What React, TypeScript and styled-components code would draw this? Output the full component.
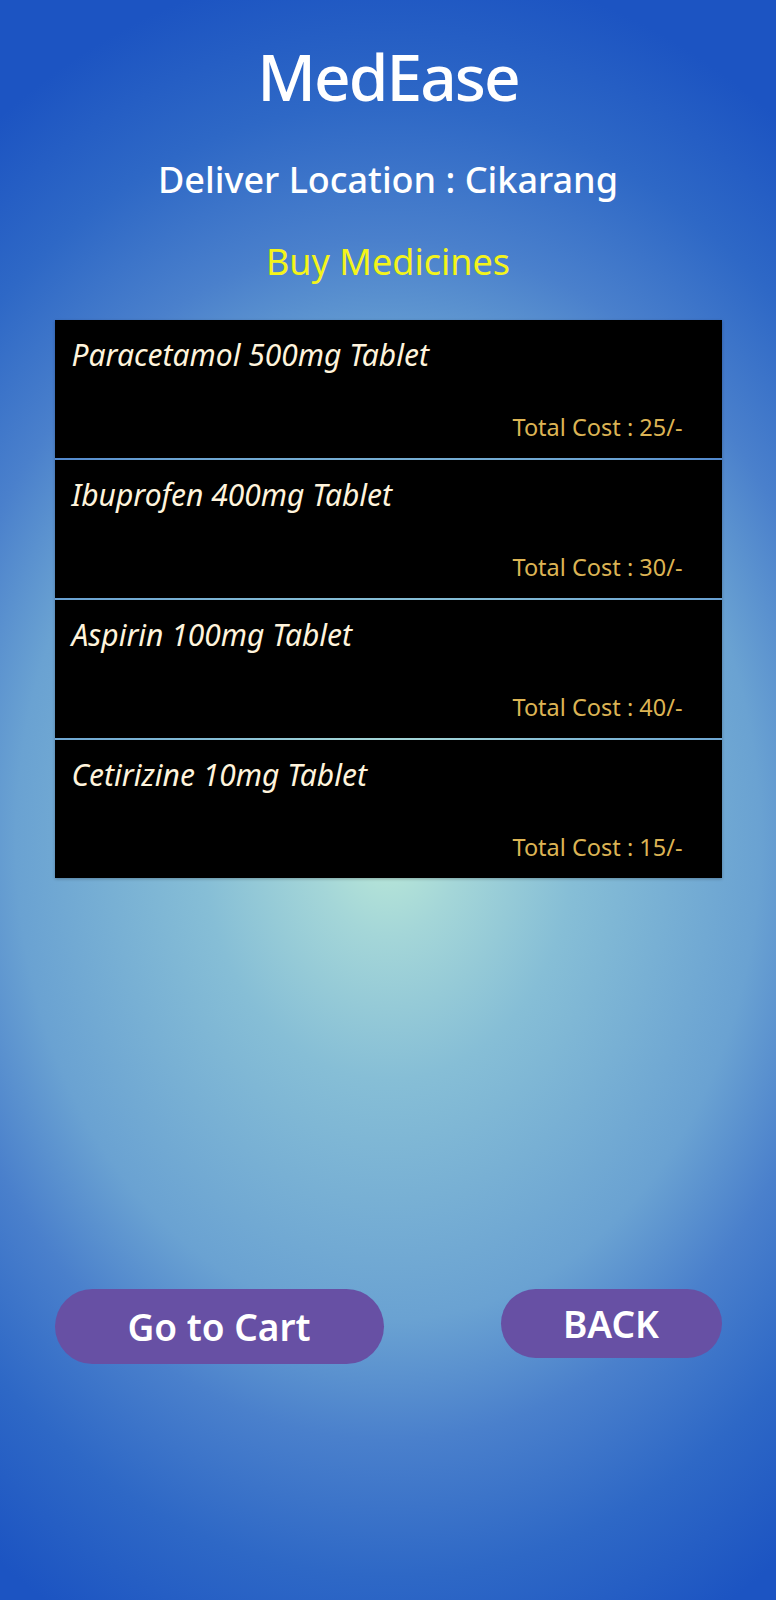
import styled, { createGlobalStyle } from "styled-components";

interface Medicine {
  id: number;
  name: string;
  cost: number;
}

const medicines: Medicine[] = [
  { id: 1, name: "Paracetamol 500mg Tablet", cost: 25 },
  { id: 2, name: "Ibuprofen 400mg Tablet", cost: 30 },
  { id: 3, name: "Aspirin 100mg Tablet", cost: 40 },
  { id: 4, name: "Cetirizine 10mg Tablet", cost: 15 },
];

export default function App() {
  return (
    <>
      <GlobalStyle />
      <Pagina>
        <Titulo>MedEase</Titulo>
        <Localizacao>Deliver Location : Cikarang</Localizacao>
        <Secao>Buy Medicines</Secao>

        <ListaRemedios>
          {medicines.map((item) => (
            <LinhaRemedio key={item.id}>
              <NomeRemedio>{item.name}</NomeRemedio>
              <CustoRemedio>Total Cost : {item.cost}/-</CustoRemedio>
            </LinhaRemedio>
          ))}
        </ListaRemedios>

        <ContainerBotoes>
          <BotaoPilula type="button" $largura={329} $altura={75}>
            Go to Cart
          </BotaoPilula>
          <BotaoPilula type="button" $largura={221} $altura={69}>
            BACK
          </BotaoPilula>
        </ContainerBotoes>
      </Pagina>
    </>
  );
}

const GlobalStyle = createGlobalStyle`
  html, body {
    margin: 0;
    padding: 0;
  }

  body {
    font-family: "Noto Sans", "Open Sans", sans-serif;
  }
`;

const Pagina = styled.div`
  min-height: 1600px;
  box-sizing: border-box;
  padding-top: 45px;
  display: flex;
  flex-direction: column;
  align-items: center;
  background: radial-gradient(
    ellipse 620px 800px at 50% 840px,
    #bcead8 0%,
    #a4d6d8 12%,
    #86bed6 30%,
    #6aa2d2 60%,
    #4a80cc 75%,
    #2e68c6 92%,
    #1c54c2 110%
  );
`;

const Titulo = styled.h1`
  margin: 0;
  font-size: 64px;
  line-height: 1;
  font-weight: 500;
  letter-spacing: -2px;
  color: #ffffff;
`;

const Localizacao = styled.h2`
  margin: 53px 0 0;
  font-size: 36px;
  line-height: 1;
  font-weight: 500;
  color: #ffffff;
`;

const Secao = styled.h3`
  margin: 46px 0 0;
  font-size: 36px;
  line-height: 1;
  font-weight: 400;
  color: #f4f41a;
`;

const ListaRemedios = styled.ul`
  list-style: none;
  margin: 40px 0 0;
  padding: 0;
  width: 667px;
  display: flex;
  flex-direction: column;
  gap: 2px;
  box-shadow: 0 1px 3px rgba(0, 0, 0, 0.25);
`;

const LinhaRemedio = styled.li`
  height: 138px;
  box-sizing: border-box;
  padding: 20px 39px 19px 17px;
  background-color: #000000;
  display: flex;
  flex-direction: column;
  justify-content: space-between;
`;

const NomeRemedio = styled.span`
  font-size: 30px;
  line-height: 1;
  font-style: italic;
  color: #fff4dc;
`;

const CustoRemedio = styled.span`
  align-self: flex-end;
  font-size: 23.5px;
  line-height: 1;
  color: #dcb454;
`;

const ContainerBotoes = styled.div`
  margin-top: 411px;
  width: 667px;
  display: flex;
  flex-direction: row;
  justify-content: space-between;
  align-items: flex-start;
`;

const BotaoPilula = styled.button<{ $largura: number; $altura: number }>`
  width: ${(p) => p.$largura}px;
  height: ${(p) => p.$altura}px;
  border: none;
  border-radius: 999px;
  background-color: #6750a4;
  color: #ffffff;
  font-family: "Noto Sans", "Open Sans", sans-serif;
  font-size: 37px;
  line-height: 1;
  font-weight: 600;
  padding: 0;
  cursor: pointer;
`;
